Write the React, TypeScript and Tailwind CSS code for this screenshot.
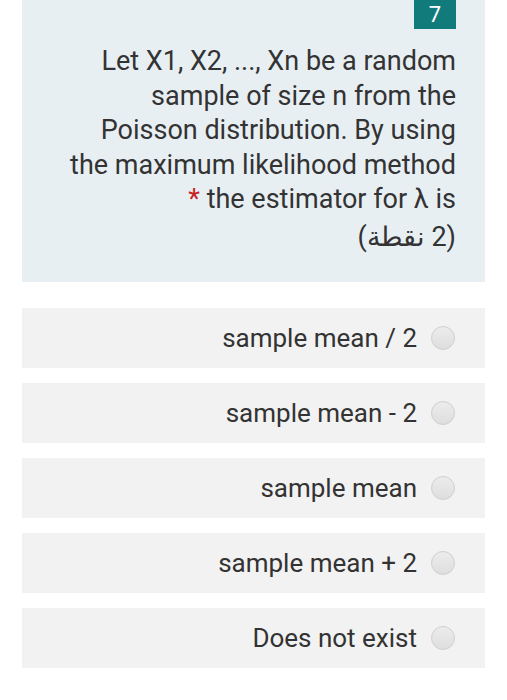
const options = ['sample mean / 2', 'sample mean - 2', 'sample mean', 'sample mean + 2', 'Does not exist'];

function Radio() {
  return <span className="w-6 h-6 shrink-0 rounded-full border border-[#cfcfcf] bg-gradient-to-b from-[#ececec] to-[#dedede]" />;
}

export default function App() {
  return (
    <div className="min-h-[700px] bg-white px-[22px] text-[#333]" style={{ fontFamily: 'Roboto, "Noto Sans", sans-serif' }}>
      <div className="bg-[#e8eff3] h-[282px] pr-[29px] flex flex-col items-end">
        <div className="w-[42px] h-[29px] bg-[#117b7c] text-white text-[22px] leading-[29px] text-center">7</div>
        <div className="mt-[15px] text-right text-[27px] leading-[34.5px]">
          <p>Let X1, X2, ..., Xn be a random</p>
          <p>sample of size n from the</p>
          <p>Poisson distribution. By using</p>
          <p>the maximum likelihood method</p>
          <p><span className="text-[#c5221f]">*</span> the estimator for λ is</p>
          <p dir="rtl" className="mt-[3px]">(2 نقطة)</p>
        </div>
      </div>
      <div className="mt-[26px] flex flex-col gap-[15px] text-[26px]">
        {options.map((o) => (
          <div key={o} className="h-[60px] bg-[#f2f2f2] flex items-center justify-end gap-[14px] pr-[30px]">
            <span>{o}</span>
            <Radio />
          </div>
        ))}
      </div>
    </div>
  );
}
